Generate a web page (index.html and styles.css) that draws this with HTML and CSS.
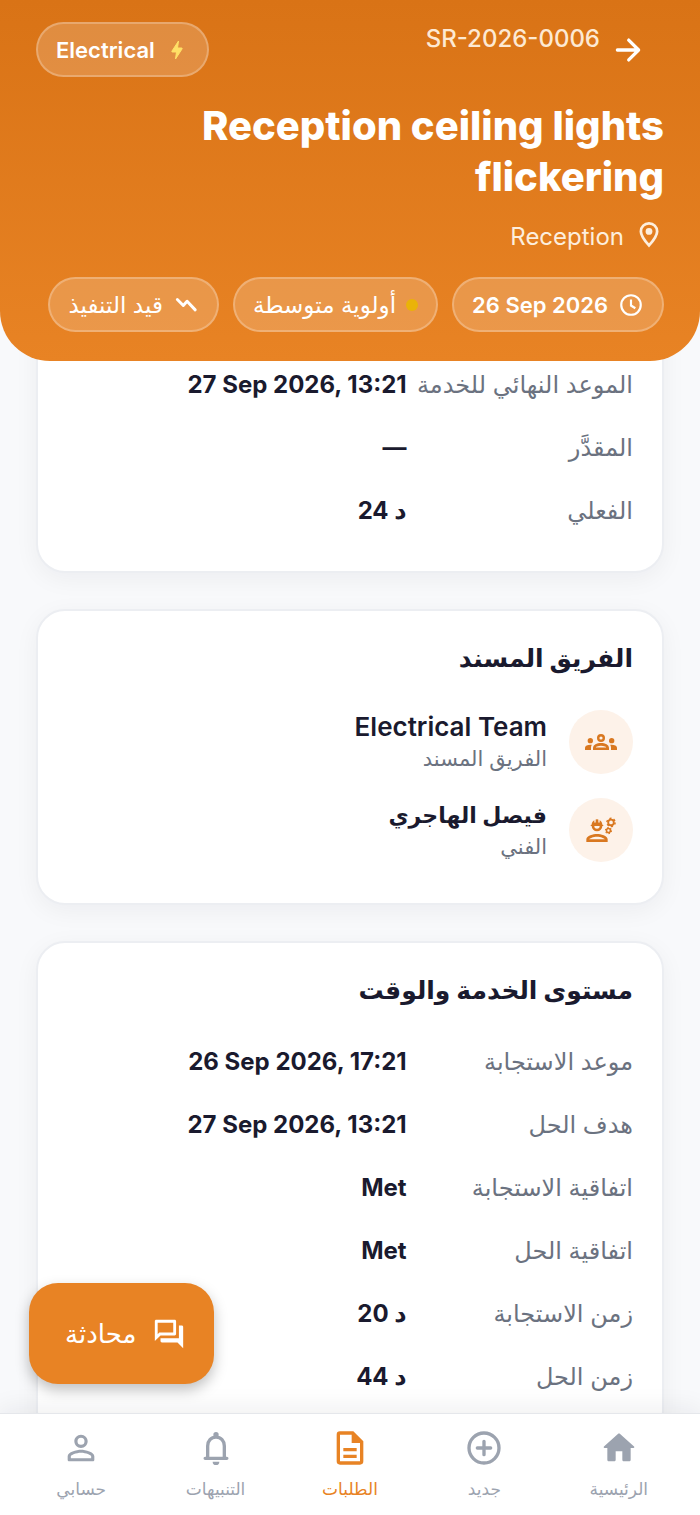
FILE: index.html
```html
<!DOCTYPE html>
<html lang="ar" dir="rtl">
<head>
<meta charset="utf-8">
<meta name="viewport" content="width=device-width, initial-scale=1">
<title>SR-2026-0006</title>
<link rel="stylesheet" href="styles.css">
</head>
<body>
<div class="app">
  <header class="hero">
    <div class="topbar">
      <button class="back" type="button" aria-label="رجوع">
        <svg class="icon-lg" viewBox="0 0 24 24" fill="none" stroke="currentColor" stroke-width="2.300" stroke-linecap="round" stroke-linejoin="round"><path d="M4.500 12h15M12.500 5l7 7-7 7"/></svg>
      </button>
      <span class="ref" dir="ltr">SR-2026-0006</span>
      <span class="chip category">
        <svg class="bolt" viewBox="0 0 24 24" fill="currentColor" stroke="currentColor" stroke-linejoin="round"><path d="M10.500 21l1-7H7.300c-.6 0-.6-.5-.3-1L13.500 3l-1 7h4.200c.6 0 .6.500.3 1z"/></svg>
        <span>Electrical</span>
      </span>
    </div>
    <h1 class="title" dir="ltr">Reception ceiling lights flickering</h1>
    <p class="place">
      <svg class="icon-md" viewBox="0 0 24 24" fill="none" stroke="currentColor" stroke-width="2.200"><path d="M12 19.500c-4.200-4.700-6.500-8-6.500-11.200a6.500 6.500 0 0 1 13 0c0 3.200-2.300 6.500-6.500 11.200z"/><circle cx="12" cy="8.300" r="2.700" fill="currentColor" stroke="none"/></svg>
      <span>Reception</span>
    </p>
    <div class="chips">
      <span class="chip">
        <svg class="icon-sm" viewBox="0 0 24 24" fill="none" stroke="currentColor" stroke-width="2"><circle cx="12" cy="12" r="9"/><path d="M12 7v5.500l4 2.500"/></svg>
        <span dir="ltr">26 Sep 2026</span>
      </span>
      <span class="chip"><i class="dot"></i><span class="ar">أولوية متوسطة</span></span>
      <span class="chip">
        <svg class="icon-sm" viewBox="0 0 24 24" fill="none" stroke="currentColor" stroke-width="2.700" stroke-linecap="round" stroke-linejoin="round"><path d="M4 7l5.500 5.500 3.500-4 7.500 8"/></svg>
        <span class="ar">قيد التنفيذ</span>
      </span>
    </div>
  </header>

  <main class="content">
    <section class="card card-first">
      <dl class="rows">
        <div class="row"><dt>الموعد النهائي للخدمة</dt><dd dir="ltr">27 Sep 2026, 13:21</dd></div>
        <div class="row"><dt>المقدَّر</dt><dd dir="ltr">—</dd></div>
        <div class="row"><dt>الفعلي</dt><dd dir="ltr">24 د</dd></div>
      </dl>
    </section>

    <section class="card">
      <h2 class="card-title">الفريق المسند</h2>
      <div class="member">
        <span class="avatar">
          <svg class="icon-avatar" viewBox="0 0 24 24" fill="currentColor"><circle cx="4" cy="11" r="2"/><circle cx="20" cy="11" r="2"/><path d="M5.100 14.100A7 7 0 0 0 4 14c-1 0-1.900.2-2.800.6A2 2 0 0 0 0 16.400V18h4.500v-1.600c0-.8.2-1.600.6-2.300zM18.900 14.100A7 7 0 0 1 20 14c1 0 1.900.2 2.800.6a2 2 0 0 1 1.200 1.800V18h-4.500v-1.600c0-.8-.2-1.600-.6-2.300z"/><path fill-rule="evenodd" d="M12 6a3 3 0 1 0 0 6 3 3 0 0 0 0-6zm0 1.800a1.200 1.200 0 1 1 0 2.400 1.200 1.200 0 0 1 0-2.400zM12 12.800c-1.600 0-3 .4-4.200.9A3 3 0 0 0 6 16.400V18h12v-1.600a3 3 0 0 0-1.800-2.700c-1.200-.5-2.600-.9-4.200-.9zM8.100 16.200c.1-.3.1-.5.900-.8 1-.4 2-.6 3-.6s2 .2 3 .6c.8.300.8.500.9.800z"/></svg>
        </span>
        <div><p class="name">Electrical Team</p><p class="role">الفريق المسند</p></div>
      </div>
      <div class="member">
        <span class="avatar">
          <svg class="icon-avatar" viewBox="0 0 24 24" fill="currentColor"><path fill-rule="evenodd" d="M9 15c-2.700 0-8 1.300-8 4v2h16v-2c0-2.700-5.300-4-8-4zm-5.900 4c.3-.7 3-2 5.900-2s5.600 1.300 5.900 2z"/><path fill-rule="evenodd" d="M4.700 9h.3a4 4 0 0 0 8 0h.3a.5.500 0 0 0 0-1H13c0-1.500-.8-2.800-2-3.400V6a.5.500 0 0 1-1 0V4.100a4 4 0 0 0-2 0V6a.5.500 0 0 1-1 0V4.600C5.800 5.200 5 6.500 5 8h-.3a.5.500 0 0 0 0 1zM7 9h4a2 2 0 0 1-4 0z"/><g fill="none" stroke="currentColor"><circle cx="19.500" cy="6.300" r="2.100" stroke-width="1.400"/><circle cx="19.500" cy="6.300" r="3.100" stroke-width="1.100" stroke-dasharray="1.600 1.650"/><circle cx="17.600" cy="12.400" r="1.500" stroke-width="1.200"/><circle cx="17.600" cy="12.400" r="2.300" stroke-width=".8" stroke-dasharray="1.100 1.300"/></g></svg>
        </span>
        <div><p class="name name-ar">فيصل الهاجري</p><p class="role">الفني</p></div>
      </div>
    </section>

    <section class="card">
      <h2 class="card-title">مستوى الخدمة والوقت</h2>
      <dl class="rows">
        <div class="row"><dt>موعد الاستجابة</dt><dd dir="ltr">26 Sep 2026, 17:21</dd></div>
        <div class="row"><dt>هدف الحل</dt><dd dir="ltr">27 Sep 2026, 13:21</dd></div>
        <div class="row"><dt>اتفاقية الاستجابة</dt><dd dir="ltr">Met</dd></div>
        <div class="row"><dt>اتفاقية الحل</dt><dd dir="ltr">Met</dd></div>
        <div class="row"><dt>زمن الاستجابة</dt><dd dir="ltr">20 د</dd></div>
        <div class="row"><dt>زمن الحل</dt><dd dir="ltr">44 د</dd></div>
      </dl>
    </section>
  </main>

  <div class="bottom">
    <button class="chat" type="button">
      <svg class="icon-lg" viewBox="0 0 24 24" fill="currentColor"><path d="M15 4v7H5.170L4 12.170V4h11m1-2H3c-.55 0-1 .45-1 1v14l4-4h10c.55 0 1-.45 1-1V3c0-.55-.45-1-1-1zm5 4h-2v9H6v2c0 .55.45 1 1 1h11l4 4V7c0-.55-.45-1-1-1z"/></svg>
      <span>محادثة</span>
    </button>
    <nav class="nav">
      <a href="#home"><svg class="icon-nav" viewBox="0 0 24 24" fill="currentColor"><path d="M10 19v-5h4v5c0 .55.45 1 1 1h3c.55 0 1-.45 1-1v-7h1.700c.46 0 .68-.57.33-.87L12.670 3.600c-.38-.34-.96-.34-1.340 0l-8.360 7.530c-.34.300-.13.870.33.870H5v7c0 .55.45 1 1 1h3c.55 0 1-.45 1-1z"/></svg><span>الرئيسية</span></a>
      <a href="#new"><svg class="icon-nav" viewBox="0 0 24 24" fill="none" stroke="currentColor" stroke-width="2" stroke-linecap="round"><circle cx="12" cy="12" r="9"/><path d="M12 8v8M8 12h8"/></svg><span>جديد</span></a>
      <a class="active" href="#requests" aria-current="page"><svg class="icon-nav" viewBox="0 0 24 24" fill="currentColor"><path fill-rule="evenodd" d="M14 2H6a2 2 0 0 0-2 2v16a2 2 0 0 0 2 2h12a2 2 0 0 0 2-2V8zM6 4h7v5h5v11H6z"/><path d="M8 12h8v2H8zM8 16h8v2H8z"/></svg><span>الطلبات</span></a>
      <a href="#alerts"><svg class="icon-nav" viewBox="0 0 24 24"><path fill="none" stroke="currentColor" stroke-width="2" stroke-linecap="round" stroke-linejoin="round" d="M5.500 18.200h13M7 18v-7.200c0-3 2-5.300 5-5.300s5 2.300 5 5.300V18"/><circle cx="12" cy="4" r="1.600" fill="currentColor"/><path fill="currentColor" d="M10 20.200h4a2 2 0 0 1-4 0z"/></svg><span>التنبيهات</span></a>
      <a href="#account"><svg class="icon-nav" viewBox="0 0 24 24" fill="currentColor"><path d="M12 5.900a2.100 2.100 0 1 1 0 4.200 2.100 2.100 0 0 1 0-4.200m0 9c2.970 0 6.100 1.460 6.100 2.100v1.100H5.900V17c0-.64 3.130-2.100 6.100-2.100M12 4C9.790 4 8 5.790 8 8s1.790 4 4 4 4-1.790 4-4-1.790-4-4-4zm0 9c-2.670 0-8 1.340-8 4v2c0 .6.4 1 1 1h14c.6 0 1-.4 1-1v-2c0-2.660-5.330-4-8-4z"/></svg><span>حسابي</span></a>
    </nav>
  </div>
</div>
</body>
</html>
```
FILE: styles.css
```css
* { box-sizing: border-box; margin: 0; padding: 0; }

body {
  font-family: Inter, "DejaVu Sans", sans-serif;
  color: #1a1a2e;
  background: #f8f9fb;
}

button { font: inherit; color: inherit; border: 0; background: none; cursor: pointer; }
a { color: inherit; text-decoration: none; }
svg { display: block; flex: none; }

.icon-sm { width: 26px; height: 26px; }
.icon-md { width: 30px; height: 30px; }
.icon-avatar { width: 32px; height: 32px; }
.icon-lg { width: 34px; height: 34px; }
.icon-nav { width: 40px; height: 40px; }

.app {
  display: flex;
  flex-direction: column;
  height: 100vh;
  overflow: hidden;
}

.hero {
  position: relative;
  z-index: 1;
  flex: none;
  padding: 22px 36px 29px;
  color: #fff;
  background: linear-gradient(#d97316, #e88324);
  border-radius: 0 0 50px 50px;
}

.topbar { display: flex; align-items: flex-start; height: 55px; }
.back { display: grid; place-items: center; width: 64px; height: 55px; padding-right: 8px; }
.ref { font-size: 24px; line-height: 34px; font-weight: 500; color: #fde9d3; }
.category { margin-right: auto; font-weight: 700; }
.bolt { width: 24px; height: 24px; color: #ffe066; }

.chip {
  display: flex;
  align-items: center;
  gap: 10px;
  height: 55px;
  padding: 0 18px;
  font-size: 22px;
  font-weight: 600;
  white-space: nowrap;
  background: rgba(255, 255, 255, .18);
  border: 2px solid rgba(255, 255, 255, .24);
  border-radius: 28px;
}
.chip .ar { font-size: 23px; font-weight: 400; }
.dot { width: 12px; height: 12px; border-radius: 50%; background: #eab308; }

.title {
  margin-top: 23px;
  font-size: 40px;
  line-height: 51px;
  font-weight: 800;
  text-align: right;
}
.place {
  display: flex;
  align-items: center;
  gap: 10px;
  height: 50px;
  margin: 9px 0 16px;
  font-size: 24px;
  color: #fdeedd;
}
.chips { display: flex; gap: 14px; }

.content {
  flex: 1;
  display: flex;
  flex-direction: column;
  gap: 36px;
  min-height: 0;
  margin-top: -60px;
  padding: 0 36px;
  overflow: hidden;
}

.card {
  flex: none;
  padding: 29px;
  background: #fff;
  border: 2px solid #eceef2;
  border-radius: 29px;
  box-shadow: 0 6px 24px rgba(26, 26, 46, .05);
}
.card-first { padding-top: 50px; }

.card-title {
  margin-bottom: 22px;
  font-size: 25px;
  line-height: 36px;
  font-weight: 700;
}

.row {
  display: grid;
  grid-template-columns: 2fr 3fr;
  align-items: center;
  height: 63px;
  white-space: nowrap;
}
.row dt { font-size: 24px; color: #6b7280; }
.row dd { font-size: 24px; font-weight: 700; text-align: right; }

.member { display: flex; align-items: center; gap: 22px; padding: 12px 0; }
.avatar {
  display: grid;
  place-items: center;
  width: 64px;
  height: 64px;
  color: #d97820;
  background: #fdf2e9;
  border-radius: 50%;
}
.name { font-size: 26px; line-height: 34px; font-weight: 600; }
.name-ar { font-size: 22px; }
.role { font-size: 21px; line-height: 30px; color: #6b7280; }

.bottom { position: relative; z-index: 2; flex: none; }
.chat {
  position: absolute;
  left: 29px;
  bottom: calc(100% + 29px);
  display: flex;
  align-items: center;
  gap: 16px;
  height: 101px;
  padding: 0 28px 0 36px;
  font-size: 26px;
  color: #fff;
  background: #e88324;
  border-radius: 29px;
  box-shadow: 0 6px 14px rgba(0, 0, 0, .25);
}

.nav {
  display: flex;
  height: 102px;
  padding: 14px 14px 0;
  background: #fff;
  border-top: 1px solid #e5e7eb;
  box-shadow: 0 -4px 24px rgba(26, 26, 46, .07);
}
.nav a {
  flex: 1;
  display: flex;
  flex-direction: column;
  align-items: center;
  gap: 8px;
  font-size: 17px;
  line-height: 26px;
  color: #9ca3af;
}
.nav .active { color: #e88324; }
```
